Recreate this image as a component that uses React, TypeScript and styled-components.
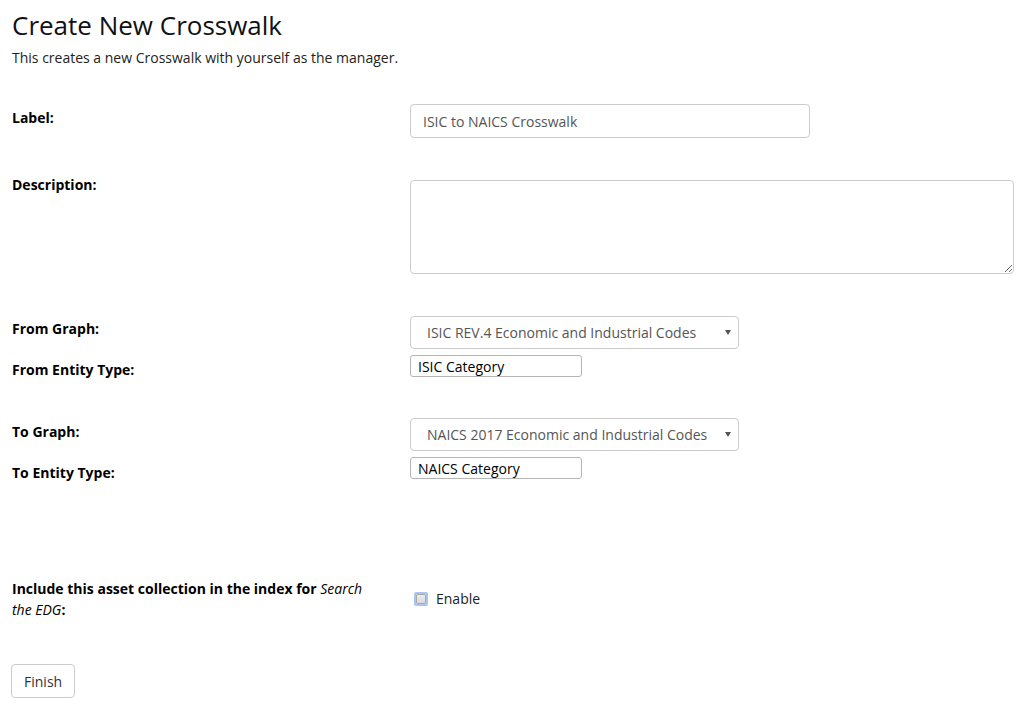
import React from 'react';
import styled, { createGlobalStyle } from 'styled-components';

const GlobalStyle = createGlobalStyle`
  html, body {
    margin: 0;
    padding: 0;
    background: #fff;
  }
  body {
    font-family: "Open Sans", "Liberation Sans", sans-serif;
    font-size: 14px;
    color: #000;
  }
`;

const Page = styled.div`
  padding: 9px 12px 0 12px;
  width: 1028px;
  box-sizing: border-box;
`;

const Title = styled.h1`
  margin: 0;
  font-size: 26px;
  font-weight: 400;
  line-height: 32px;
  color: #111;
`;

const Intro = styled.p`
  margin: 0;
  margin-top: 7px;
  line-height: 20px;
  color: #222;
`;

const Form = styled.form`
  display: flex;
  flex-direction: column;
`;

const Row = styled.div<{ $top: number }>`
  display: grid;
  grid-template-columns: 398px 1fr;
  align-items: start;
  margin-top: ${(p) => p.$top}px;
`;

const Label = styled.label<{ $offset?: number }>`
  font-weight: 700;
  line-height: ${(p) => (p.$offset === undefined ? 21 : 20)}px;
  margin-top: ${(p) => p.$offset ?? 0}px;
  max-width: 360px;
  em {
    font-style: italic;
    font-weight: 400;
  }
`;

const TextInput = styled.input`
  box-sizing: border-box;
  width: 400px;
  height: 34px;
  padding: 0 12px;
  border: 1px solid #ccc;
  border-radius: 4px;
  font: inherit;
  font-size: 14px;
  color: #555;
  outline: none;
`;

const TextArea = styled.textarea`
  box-sizing: border-box;
  display: block;
  width: 604px;
  height: 94px;
  margin-top: 5px;
  padding: 6px 12px;
  border: 1px solid #ccc;
  border-radius: 4px;
  font: inherit;
  color: #555;
  resize: vertical;
  outline: none;
`;

const SelectWrap = styled.div`
  position: relative;
  width: 329px;
  &::after {
    content: '';
    position: absolute;
    right: 8px;
    top: 14px;
    border-left: 3px solid transparent;
    border-right: 3px solid transparent;
    border-top: 5px solid #555;
    pointer-events: none;
  }
`;

const Select = styled.select`
  box-sizing: border-box;
  width: 100%;
  height: 33px;
  padding: 0 20px 0 16px;
  border: 1px solid #ccc;
  border-radius: 4px;
  background: #fff;
  font: inherit;
  color: #555;
  appearance: none;
  -webkit-appearance: none;
  outline: none;
`;

const SmallInput = styled.input`
  box-sizing: border-box;
  width: 172px;
  height: 22px;
  padding: 0 7px;
  border: 1px solid #b5b5b5;
  border-radius: 3px;
  font: inherit;
  color: #000;
  outline: none;
`;

const CheckLine = styled.label`
  display: flex;
  align-items: center;
  gap: 8px;
  margin-top: 11px;
  padding-left: 4px;
  line-height: 20px;
  color: #222;
`;

const CheckBox = styled.span`
  box-sizing: border-box;
  width: 14px;
  height: 14px;
  border: 2px solid #a9c6f3;
  border-radius: 2px;
  display: flex;
  &::before {
    content: '';
    flex: 1;
    border: 1px solid #a7a7a7;
    border-radius: 1px;
    background: linear-gradient(#ececec, #d9d9d9);
  }
`;

const Button = styled.button`
  box-sizing: border-box;
  margin-top: 44px;
  margin-left: -1px;
  align-self: flex-start;
  height: 34px;
  padding: 0 12px;
  border: 1px solid #ccc;
  border-radius: 4px;
  background: #fff;
  font: inherit;
  color: #333;
`;

export default function App() {
  return (
    <>
      <GlobalStyle />
      <Page>
        <Title>Create New Crosswalk</Title>
        <Intro>This creates a new Crosswalk with yourself as the manager.</Intro>
        <Form onSubmit={(e) => e.preventDefault()}>
          <Row $top={36}>
            <Label $offset={4}>Label:</Label>
            <TextInput defaultValue="ISIC to NAICS Crosswalk" />
          </Row>
          <Row $top={37}>
            <Label $offset={0}>Description:</Label>
            <TextArea />
          </Row>
          <Row $top={42}>
            <Label $offset={3}>From Graph:</Label>
            <SelectWrap>
              <Select defaultValue="isic">
                <option value="isic">ISIC REV.4 Economic and Industrial Codes</option>
              </Select>
            </SelectWrap>
          </Row>
          <Row $top={6}>
            <Label $offset={5}>From Entity Type:</Label>
            <SmallInput defaultValue="ISIC Category" />
          </Row>
          <Row $top={38}>
            <Label $offset={4}>To Graph:</Label>
            <SelectWrap>
              <Select defaultValue="naics">
                <option value="naics">NAICS 2017 Economic and Industrial Codes</option>
              </Select>
            </SelectWrap>
          </Row>
          <Row $top={6}>
            <Label $offset={6}>To Entity Type:</Label>
            <SmallInput defaultValue="NAICS Category" />
          </Row>
          <Row $top={95}>
            <Label>
              Include this asset collection in the index for <em>Search the EDG</em>:
            </Label>
            <CheckLine>
              <CheckBox />
              Enable
            </CheckLine>
          </Row>
          <Button type="submit">Finish</Button>
        </Form>
      </Page>
    </>
  );
}
